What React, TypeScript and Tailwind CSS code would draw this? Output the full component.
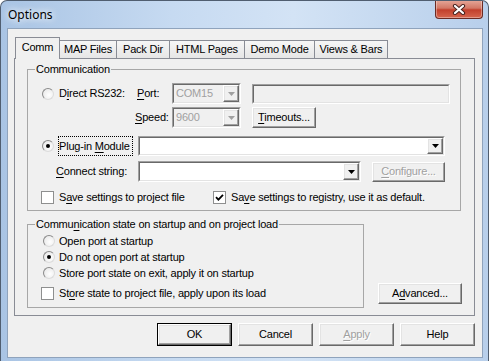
import type { ReactNode } from "react";

const sunkenOuter = "border border-t-[#a0a0a0] border-l-[#a0a0a0] border-r-white border-b-white";
const sunkenInner = "border border-t-[#696969] border-l-[#696969] border-r-[#e3e3e3] border-b-[#e3e3e3]";
const raised =
  "border border-t-white border-l-white border-r-[#696969] border-b-[#696969] shadow-[inset_-1px_-1px_0_#a0a0a0,inset_1px_1px_0_#e3e3e3] bg-[#f0f0f0]";

function U({ children }: { children: ReactNode }) {
  return <span className="underline decoration-1 underline-offset-[2px]">{children}</span>;
}

function Radio({ checked }: { checked?: boolean }) {
  return (
    <span className="w-[12px] h-[12px] shrink-0 rounded-full flex items-center justify-center border border-t-[#8a8a8a] border-l-[#8a8a8a] border-r-[#dcdcdc] border-b-[#dcdcdc] bg-[radial-gradient(circle_at_60%_60%,#ffffff,#e4e4e4)]">
      {checked && <span className="w-[4px] h-[4px] rounded-full bg-black" />}
    </span>
  );
}

function Check({ checked }: { checked?: boolean }) {
  return (
    <span className="w-[13px] h-[13px] shrink-0 bg-white border border-[#8e8f8f] flex items-center justify-center">
      {checked && (
        <svg width="9" height="9" viewBox="0 0 9 9">
          <path d="M1 4.2 L3.4 6.6 L8 1.8" stroke="#000" strokeWidth="1.8" fill="none" />
        </svg>
      )}
    </span>
  );
}

function Arrow({ disabled }: { disabled?: boolean }) {
  return (
    <svg width="7" height="4" viewBox="0 0 7 4">
      <path d="M0 0 H7 L3.5 4 Z" fill={disabled ? "#a0a0a0" : "#000"} />
    </svg>
  );
}

function Combo({
  className,
  value,
  disabled,
}: {
  className: string;
  value?: string;
  disabled?: boolean;
}) {
  return (
    <div className={`${sunkenOuter} ${className} shrink-0`}>
      <div className={`${sunkenInner} h-full flex ${disabled ? "bg-[#f0f0f0]" : "bg-white"}`}>
        <div className={`flex-1 pl-[2px] flex items-center ${disabled ? "text-[#a0a0a0]" : ""}`}>{value}</div>
        <div className={`${raised} w-[16px] h-full flex items-center justify-center`}>
          <Arrow disabled={disabled} />
        </div>
      </div>
    </div>
  );
}

function Button({
  className,
  children,
  disabled,
  isDefault,
}: {
  className: string;
  children: ReactNode;
  disabled?: boolean;
  isDefault?: boolean;
}) {
  return (
    <div className={`${className} shrink-0 ${isDefault ? "border border-black" : ""}`}>
      <div
        className={`${raised} w-full h-full flex items-center justify-center whitespace-nowrap ${
          disabled ? "text-[#a0a0a0] [text-shadow:1px_1px_0_#fff]" : ""
        }`}
      >
        <span>{children}</span>
      </div>
    </div>
  );
}

const tabs = [
  { label: "MAP Files", w: "w-[57px]" },
  { label: "Pack Dir", w: "w-[53px]" },
  { label: "HTML Pages", w: "w-[75px]" },
  { label: "Demo Mode", w: "w-[70px]" },
  { label: "Views & Bars", w: "w-[73px]" },
];

export default function App() {
  return (
    <div className="w-[489px] h-[361px] flex flex-col rounded-t-[7px] border border-b-0 border-[#505e70] bg-[linear-gradient(to_right,#a9c4e4,#c6daf1_35%,#d3e3f5_60%,#b8cfeb)] font-['Liberation_Sans',Arial,sans-serif] text-[11px] tracking-[-0.2px] text-black overflow-hidden">
      {/* title bar */}
      <div className="h-[27px] flex items-start justify-between">
        <div className="pl-[7px] pt-[6px] font-['Noto_Sans',sans-serif] text-[12px] tracking-normal leading-[16px] [text-shadow:0_0_6px_#fff,0_0_10px_#fff]">
          Options
        </div>
        <div className="mr-[5px] w-[48px] h-[19px] -mt-[1px] rounded-b-[4px] border border-t-0 border-[#6b2b24] bg-[linear-gradient(to_bottom,#e6a99b,#d37866_45%,#c2402c_55%,#d6664e)] flex items-center justify-center shadow-[inset_0_0_0_1px_rgba(255,255,255,0.35)]">
          <svg width="14" height="11" viewBox="0 0 14 11">
            <path d="M3 2 L11 9 M11 2 L3 9" stroke="#4a2420" strokeWidth="4.2" strokeLinecap="round" />
            <path d="M3 2 L11 9 M11 2 L3 9" stroke="#fff" strokeWidth="2.2" strokeLinecap="round" />
          </svg>
        </div>
      </div>

      {/* client area */}
      <div className="ml-[6px] mr-[5px] h-[330px] border border-[#8fa3bc] bg-[#f0f0f0] flex flex-col pt-[8px] pl-[6px] pr-[7px]">
        {/* tab strip */}
        <div className="h-[21px] flex items-end shrink-0">
          <div className="relative z-10 ml-[1px] -mb-[1px] w-[45px] h-[22px] border border-b-0 border-[#898c95] bg-[#f0f0f0] flex justify-center pt-[3px] leading-[13px]">
            Comm
          </div>
          {tabs.map((t) => (
            <div
              key={t.label}
              className={`${t.w} h-[18px] border-t border-r border-[#898c95] bg-[linear-gradient(to_bottom,#f6f6f6,#e6e6e6)] flex justify-center pt-[2px] leading-[13px]`}
            >
              {t.label}
            </div>
          ))}
        </div>

        {/* tab panel */}
        <div className="h-[258px] border border-[#898c95] bg-[#f0f0f0] shrink-0">
          <fieldset className="ml-[12px] mt-[4px] w-[434px] min-w-0 border border-[#a7a7a7] pb-[6px]">
            <legend className="ml-[7px] px-[1px] leading-[13px]">Communication</legend>

            <div className="mt-[7px] h-[21px] flex items-center">
              <span className="ml-[14px]">
                <Radio />
              </span>
              <span className="ml-[5px] w-[76px]">
                D<U>i</U>rect RS232:
              </span>
              <span className="w-[37px] pl-[2px]">
                <U>P</U>ort:
              </span>
              <Combo className="w-[69px] h-[21px]" value="COM15" disabled />
              <div className={`${sunkenOuter} ml-[11px] w-[198px] h-[20px]`}>
                <div className={`${sunkenInner} h-full bg-[#f0f0f0]`} />
              </div>
            </div>

            <div className="mt-[3px] h-[21px] flex items-center">
              <span className="ml-[107px] w-[37px]">
                <U>S</U>peed:
              </span>
              <Combo className="w-[69px] h-[21px]" value="9600" disabled />
              <Button className="ml-[11px] w-[64px] h-[21px]">
                <U>T</U>imeouts...
              </Button>
            </div>

            <div className="mt-[8px] h-[20px] flex items-center">
              <span className="ml-[14px]">
                <Radio checked />
              </span>
              <span className="ml-[4px] w-[75px] h-[20px] border border-dotted border-black block leading-[18px] whitespace-nowrap">
                Plug-in <U>M</U>odule
              </span>
              <Combo className="ml-[5px] w-[307px] h-[20px]" />
            </div>

            <div className="mt-[5px] h-[21px] flex items-center">
              <span className="ml-[28px] w-[82px]">
                <U>C</U>onnect string:
              </span>
              <Combo className="w-[223px] h-[21px]" />
              <Button className="ml-[11px] w-[73px] h-[20px]" disabled>
                <U>C</U>onfigure...
              </Button>
            </div>

            <div className="mt-[9px] h-[13px] flex items-center">
              <span className="ml-[13px]">
                <Check />
              </span>
              <span className="ml-[5px] w-[154px] whitespace-nowrap">
                S<U>a</U>ve settings to project file
              </span>
              <Check checked />
              <span className="ml-[5px] whitespace-nowrap">
                Sa<U>v</U>e settings to registry, use it as default.
              </span>
            </div>
          </fieldset>

          <div className="mt-[7px] flex items-end">
            <fieldset className="ml-[12px] w-[337px] min-w-0 border border-[#a7a7a7] pb-[7px]">
              <legend className="ml-[7px] px-[1px] leading-[13px] whitespace-nowrap">
                Commu<U>n</U>ication state on startup and on project load
              </legend>
              <div className="mt-[2px] h-[16px] flex items-center">
                <span className="ml-[15px]">
                  <Radio />
                </span>
                <span className="ml-[4px]">Open port at startup</span>
              </div>
              <div className="h-[16px] flex items-center">
                <span className="ml-[15px]">
                  <Radio checked />
                </span>
                <span className="ml-[4px]">Do not open port at startup</span>
              </div>
              <div className="h-[16px] flex items-center">
                <span className="ml-[15px]">
                  <Radio />
                </span>
                <span className="ml-[4px]">Store port state on exit, apply it on startup</span>
              </div>
              <div className="mt-[6px] h-[13px] flex items-center">
                <span className="ml-[13px]">
                  <Check />
                </span>
                <span className="ml-[5px] whitespace-nowrap">
                  St<U>o</U>re state to project file, apply upon its load
                </span>
              </div>
            </fieldset>
            <Button className="ml-[14px] mb-[4px] w-[84px] h-[21px]">
              A<U>d</U>vanced...
            </Button>
          </div>
        </div>

        {/* dialog buttons */}
        <div className="mt-[7px] flex justify-end gap-[6px]">
          <Button className="w-[75px] h-[23px]" isDefault>
            OK
          </Button>
          <Button className="w-[75px] h-[23px]">Cancel</Button>
          <Button className="w-[75px] h-[23px]" disabled>
            <U>A</U>pply
          </Button>
          <Button className="w-[75px] h-[23px]">Help</Button>
        </div>
      </div>
    </div>
  );
}
